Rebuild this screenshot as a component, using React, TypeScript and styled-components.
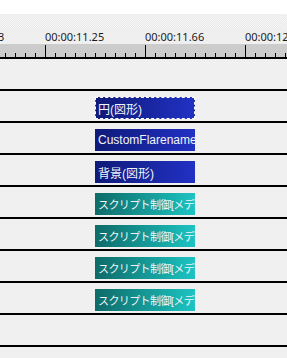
import React from 'react'
import styled, { createGlobalStyle } from 'styled-components'

type Clip = { label: string; kind: 'figure' | 'script'; selected?: boolean }

const rows: (Clip | null)[] = [
    null,
    { label: '円(図形)', kind: 'figure', selected: true },
    { label: 'CustomFlarename', kind: 'figure' },
    { label: '背景(図形)', kind: 'figure' },
    { label: 'スクリプト制御[メディアオブジェクト]', kind: 'script' },
    { label: 'スクリプト制御[メディアオブジェクト]', kind: 'script' },
    { label: 'スクリプト制御[メディアオブジェクト]', kind: 'script' },
    { label: 'スクリプト制御[メディアオブジェクト]', kind: 'script' },
    null,
    null,
]

const labels = [
    { x: -55, text: '00:00:10.83' },
    { x: 45, text: '00:00:11.25' },
    { x: 145, text: '00:00:11.66' },
    { x: 245, text: '00:00:12.07' },
]

const Ticks: React.FC = () => {
    const lines = []
    for (let x = 5; x < 300; x += 10) {
        const major = (x - 45) % 100 === 0
        lines.push(<line key={x} x1={x + 0.5} x2={x + 0.5} y1={major ? 1 : 9} y2={13} stroke="#000" strokeWidth={1} />)
    }
    return (
        <svg width="287" height="13" viewBox="0 0 287 13">
            {lines}
        </svg>
    )
}

const App: React.FC = () => {
    return (
        <StPage>
            <GlobalStyle />
            <StTopBar />
            <StDither />
            <StLabelRow>
                {labels.map((l) => (
                    <StTimeLabel key={l.text} $x={l.x}>
                        {l.text}
                    </StTimeLabel>
                ))}
            </StLabelRow>
            <StRuler>
                <Ticks />
            </StRuler>
            <StTracks>
                {rows.map((clip, i) => (
                    <StRow key={i}>
                        {clip && (
                            <StClip $kind={clip.kind} $selected={!!clip.selected} $left={95} $width={100}>
                                {clip.label}
                            </StClip>
                        )}
                    </StRow>
                ))}
            </StTracks>
        </StPage>
    )
}

const GlobalStyle = createGlobalStyle`
    html, body {
        margin: 0;
        padding: 0;
        background: #f0f0f0;
        overflow: hidden;
    }
`

const StPage = styled.div`
    width: 287px;
    height: 358px;
    display: flex;
    flex-direction: column;
    overflow: hidden;
    background: #f0f0f0;
    font-family: 'Liberation Sans', 'Noto Sans CJK JP', sans-serif;
`

const StTopBar = styled.div`
    height: 14px;
    background: #ffffff;
    flex: none;
`

const StDither = styled.div`
    height: 14px;
    flex: none;
    background: repeating-conic-gradient(#e9e9e9 0 25%, #f7f7f7 0 50%) 0 0 / 2px 2px;
`

const StLabelRow = styled.div`
    height: 16px;
    flex: none;
    position: relative;
    background: #efefef;
`

const StTimeLabel = styled.span<{ $x: number }>`
    position: absolute;
    left: ${(p) => p.$x}px;
    top: 1px;
    font-family: 'Noto Sans', sans-serif;
    font-size: 11px;
    line-height: 15px;
    color: #1b1b1b;
    white-space: nowrap;
`

const StRuler = styled.div`
    height: 13px;
    flex: none;
    background: #cccccc;
    border-bottom: 2px solid #000;
    display: flex;
    align-items: flex-end;

    svg {
        display: block;
    }
`

const StTracks = styled.div`
    display: flex;
    flex-direction: column;
`

const StRow = styled.div`
    height: 29px;
    flex: none;
    border-bottom: 2px solid #000;
    display: flex;
    align-items: flex-end;
    padding-bottom: 2px;
    box-sizing: content-box;
    margin-top: -1px;
`

const StClip = styled.div<{ $kind: 'figure' | 'script'; $selected: boolean; $left: number; $width: number }>`
    margin-left: ${(p) => p.$left}px;
    width: ${(p) => p.$width}px;
    height: 22px;
    box-sizing: border-box;
    display: flex;
    align-items: center;
    overflow: hidden;
    white-space: nowrap;
    font-size: ${(p) => (p.$kind === 'script' ? 11 : 12)}px;
    color: #f2f4f8;
    letter-spacing: ${(p) => (p.$kind === 'script' ? '-0.6px' : '0')};
    background: ${(p) =>
        p.$kind === 'figure'
            ? 'linear-gradient(to right, #0f1a78, #2131c4)'
            : 'linear-gradient(to right, #0e6b68, #1cc4c2)'};
    border: ${(p) => (p.$selected ? '1px dashed #ffffff' : 'none')};
    padding-left: ${(p) => (p.$selected ? 2 : 3)}px;
`

export default App
